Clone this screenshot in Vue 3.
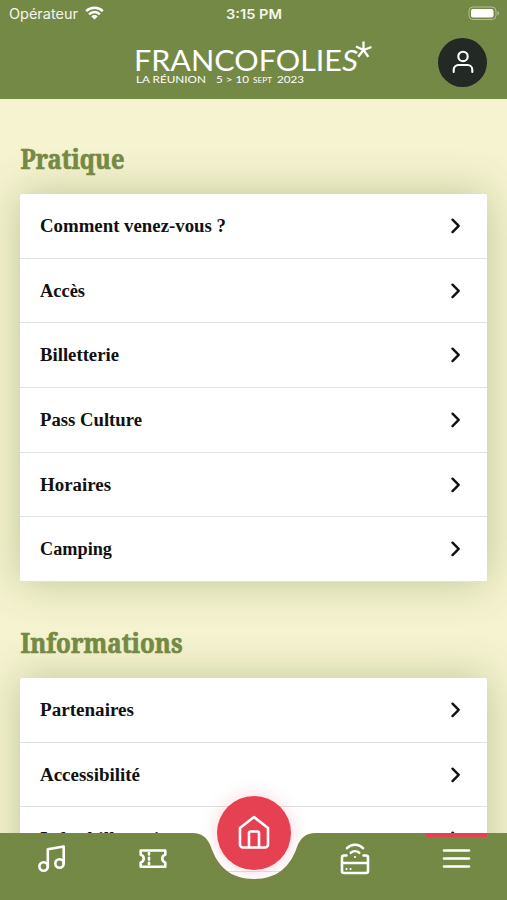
<script setup>
const sections = [
  { title: 'Pratique', width: 104, items: [
    ['Comment venez-vous ?', 186], ['Accès', 45], ['Billetterie', 79], ['Pass Culture', 102], ['Horaires', 71], ['Camping', 72]
  ] },
  { title: 'Informations', width: 162, items: [
    ['Partenaires', 94], ['Accessibilité', 100], ['Infos billetterie', 128], ['', 0]
  ] }
]
</script>

<template>
  <div class="screen">
    <header>
      <div class="status">
        <div class="carrier">
          <svg width="70" height="19"><text x="0" y="14" textLength="69" lengthAdjust="spacingAndGlyphs">Opérateur</text></svg>
          <svg class="wifi" width="19" height="14" viewBox="0 0 19 14" fill="none" stroke="#fff" stroke-width="2.5"><path d="M1.2 5.1a11.8 11.8 0 0 1 16.6 0M4.1 8.3a7.6 7.6 0 0 1 10.8 0"/><path d="M9.5 13.6 6.3 10.4a4.5 4.5 0 0 1 6.4 0Z" fill="#fff" stroke="none"/></svg>
        </div>
        <svg class="time" width="58" height="19"><text x="0" y="14" textLength="56" lengthAdjust="spacingAndGlyphs">3:15 PM</text></svg>
        <svg class="battery" width="32" height="16" viewBox="0 0 32 16"><rect x="1" y="1" width="27" height="12.5" rx="4" fill="none" stroke="#b3be97"/><rect x="3" y="3" width="22.5" height="8.5" rx="2" fill="#fff"/><path d="M29.5 5q3 2.2 0 4.5Z" fill="#b3be97"/></svg>
      </div>
      <svg class="logo" width="240" height="50" viewBox="0 0 240 50" fill="#fff">
        <text class="brand" x="-1" y="33" textLength="208" lengthAdjust="spacingAndGlyphs">FRANCOFOLIE</text>
        <text class="brand slant" x="207" y="33" textLength="16" lengthAdjust="spacingAndGlyphs">S</text>
        <g class="sub">
          <text x="1" y="45" textLength="70" lengthAdjust="spacingAndGlyphs">LA RÉUNION</text>
          <text x="81" y="45" textLength="33" lengthAdjust="spacingAndGlyphs">5 &gt; 10</text>
          <text class="month" x="118" y="45" textLength="19" lengthAdjust="spacingAndGlyphs">SEPT</text>
          <text x="142" y="45" textLength="27" lengthAdjust="spacingAndGlyphs">2023</text>
        </g>
        <path d="M228.5 12V3.5M228.5 12l8-3M228.5 12l4.8 6.8M228.5 12l-5.3 6.8M228.5 12l-7.5-3.5" stroke="#fff" stroke-width="2.3"/>
      </svg>
      <div class="profile"><svg width="24" height="26" viewBox="0 0 24 26" fill="none" stroke="#fff" stroke-width="2.1" stroke-linecap="round"><circle cx="12" cy="7.4" r="4.7"/><path d="M2.7 23v-2.3a4.7 4.7 0 0 1 4.7-4.7h9.2a4.7 4.7 0 0 1 4.7 4.7V23"/></svg></div>
    </header>
    <main>
      <section v-for="s in sections" :key="s.title">
        <h2><svg :width="s.width + 2" height="36"><text x="0.5" y="28" :textLength="s.width" lengthAdjust="spacingAndGlyphs">{{ s.title }}</text></svg></h2>
        <div class="card">
          <div v-for="i in s.items" :key="i[0]" class="row">
            <svg class="label" :width="i[1] + 2" height="28"><text x="0" y="20" :textLength="i[1]" lengthAdjust="spacingAndGlyphs">{{ i[0] }}</text></svg>
            <svg width="12" height="18" viewBox="0 0 12 18" fill="none" stroke="#111" stroke-width="2.4" stroke-linecap="round" stroke-linejoin="round"><path d="m2.5 2.7 6.2 6.2-6.2 6.2"/></svg>
          </div>
        </div>
      </section>
    </main>
    <nav>
      <svg class="bar" width="507" height="67" viewBox="0 0 507 67"><path d="M0 0H192C203 0 208 6 211 14C218 34 231 46 254 46S290 34 297 14C300 6 305 0 316 0H507V67H0Z" fill="#758946"/></svg>
      <div class="tabs">
        <div class="tab"><svg width="30" height="30" viewBox="0 0 30 30"><circle cx="6.6" cy="22.5" r="4.2"/><circle cx="22.5" cy="19.5" r="4.2"/><path d="M10.8 22.5V5.2L26.7 2.5v17"/></svg></div>
        <div class="tab"><svg width="30" height="30" viewBox="0 0 30 30"><path d="M2.7 6.5H27.3V10.8a3.9 3.9 0 0 0 0 7.6V22.7H2.7V18.4a3.9 3.9 0 0 0 0-7.6Z"/><path d="M11 9v1.5M11 13.8v1.8M11 18.8v1.5"/></svg></div>
        <div class="tab"></div>
        <div class="tab"><svg width="32" height="34" viewBox="0 0 32 34"><path d="M7.5 13.5H5a2 2 0 0 0-2 2V29a2 2 0 0 0 2 2h22a2 2 0 0 0 2-2V15.5a2 2 0 0 0-2-2H24.5M3 21h26M8 6.2a11 11 0 0 1 16 0M11.8 10.8a6.3 6.3 0 0 1 8.4 0"/><path class="dots" d="M16 15h.1M7.5 27h.1M11.5 27h.1"/></svg></div>
        <div class="tab active"><svg width="30" height="30" viewBox="0 0 30 30"><path d="M3 6.5h25M3 14.5h25M3 22.5h25"/></svg></div>
      </div>
      <div class="home"><svg width="36" height="38" viewBox="0 0 36 38"><path d="M4 15 18 4 32 15v16.5a3 3 0 0 1-3 3H7a3 3 0 0 1-3-3Z"/><path d="M13 34V20a1.5 1.5 0 0 1 1.5-1.5h7A1.5 1.5 0 0 1 23 20v14"/></svg></div>
    </nav>
  </div>
</template>

<style>
body { margin: 0; overflow: hidden; }
</style>
<style scoped>
.screen { position: relative; width: 507px; height: 900px; overflow: hidden; background: #f5f3d0; font-family: Inter, "Liberation Sans", sans-serif; }
header { position: relative; z-index: 2; height: 98.5px; background: #758946; }
.status { display: grid; grid-template-columns: 1fr 58px 1fr; align-items: center; height: 28px; padding: 0 7px 0 9px; }
.status text { font-size: 14px; fill: #f5f6ee; }
.status .time text { font-size: 13.5px; font-weight: 600; }
.carrier { display: flex; align-items: center; gap: 6px; }
.wifi { margin-top: -2px; }
.battery { justify-self: end; }
.logo { display: block; margin: 10px 0 0 135px; }
.brand { font: 28.5px Lato, sans-serif; }
.slant { font-style: italic; }
.sub { font: 10px Lato, sans-serif; }
.month { font-size: 8px; }
.profile { position: absolute; left: 438px; top: 37.5px; width: 49px; height: 49px; border-radius: 50%; background: #232925; display: flex; align-items: center; justify-content: center; }
main { padding: 42.5px 19.7px 0 20.3px; height: 759px; }
section { height: 484px; }
h2 { margin: 0; height: 53px; }
h2 svg, .label { display: block; overflow: visible; }
h2 text { font: bold 26.5px "Noto Serif", "DejaVu Serif", "Liberation Serif", serif; fill: #758946; stroke: #758946; stroke-width: .7px; }
.card { background: #fff; border-radius: 2px; box-shadow: 0 0 40px rgba(117, 137, 70, .43); }
.row { box-sizing: border-box; height: 64.7px; padding: 0 25.5px 0 19.7px; display: flex; align-items: center; justify-content: space-between; border-bottom: 1px solid #e1e2e2; }
.label text { font: bold 18.5px "Liberation Serif", serif; fill: #111; }
nav { position: absolute; z-index: 3; left: 0; bottom: 0; width: 507px; height: 67px; }
.bar { position: absolute; left: 0; top: 0; }
.tabs { position: relative; display: grid; grid-template-columns: repeat(5, 101px); height: 67px; justify-content: center; }
.tab { display: flex; justify-content: center; align-items: center; padding-bottom: 16px; }
.tab svg, .home svg { fill: none; stroke: #fff; stroke-width: 2.6; stroke-linecap: round; stroke-linejoin: round; }
.home svg { margin-top: -2px; }
.tab .dots { stroke-width: 2; }
.active { position: relative; }
.active::before { content: ""; position: absolute; top: 0; left: 21px; width: 61px; height: 3.5px; background: #e64152; }
.home { position: absolute; left: 217px; top: -37px; width: 74px; height: 74px; border-radius: 50%; background: #e64152; box-shadow: 0 0 18px rgba(230, 65, 82, .22); display: flex; align-items: center; justify-content: center; }
</style>
